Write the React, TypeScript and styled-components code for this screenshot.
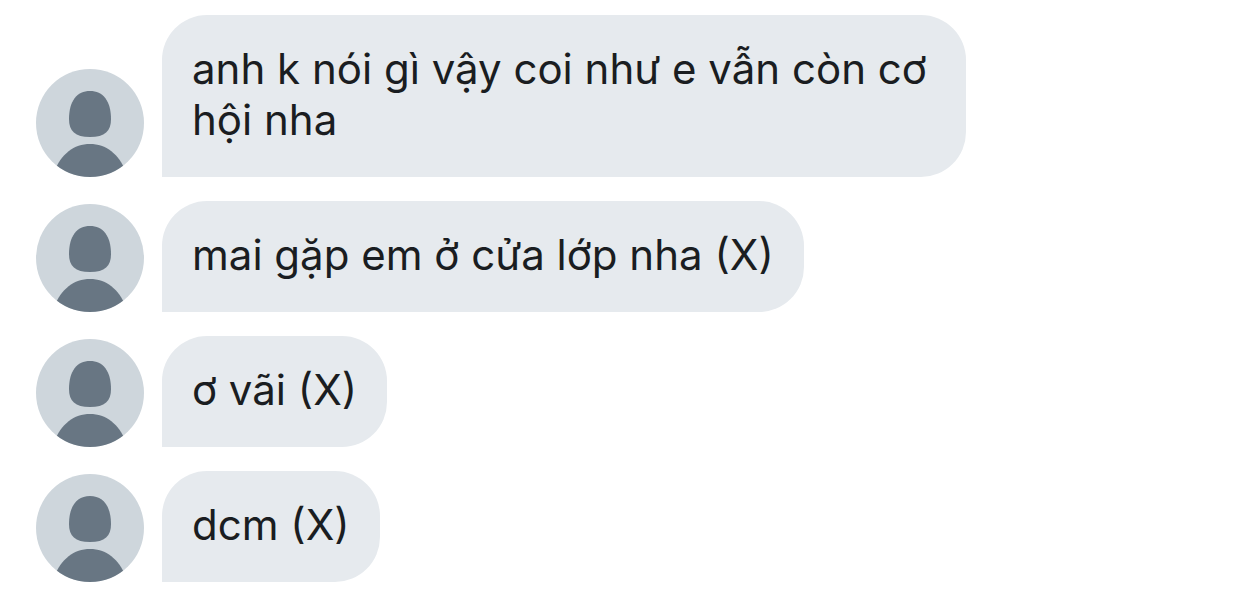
import React from "react";
import styled, { createGlobalStyle } from "styled-components";

const GlobalStyle = createGlobalStyle`
  body {
    margin: 0;
    background: #ffffff;
    color: #1a1d21;
    font-family: Inter, "Noto Sans", sans-serif;
  }
`;

const MessageList = styled.ul`
  list-style: none;
  margin: 0;
  padding: 15px 36px 29px;
  display: flex;
  flex-direction: column;
  gap: 24px;
`;

const MessageRow = styled.li`
  display: flex;
  align-items: flex-end;
  gap: 18px;
`;

const Avatar = styled.svg`
  flex: none;
  width: 108px;
  height: 108px;
  border-radius: 50%;
`;

const Bubble = styled.p`
  box-sizing: border-box;
  margin: 0;
  max-width: 804px;
  padding: 28px 30px 32px;
  border-radius: 45px 45px 45px 0;
  background: #e6eaee;
  font-size: 42px;
  font-weight: 400;
  line-height: 51px;
`;

const messages = [
  "anh k nói gì vậy coi như e vẫn còn cơ hội nha",
  "mai gặp em ở cửa lớp nha (X)",
  "ơ vãi (X)",
  "dcm (X)",
];

function UserAvatar() {
  return (
    <Avatar viewBox="0 0 108 108" aria-hidden="true">
      <rect width="108" height="108" fill="#ced6dc" />
      <path
        d="M54 22C67 22 75 32 75 50C75 62 69 68 54 68C39 68 33 62 33 50C33 32 41 22 54 22Z"
        fill="#687683"
      />
      <path d="M18 103C25 85 38 75 54 75C70 75 83 85 90 103V108H18Z" fill="#687683" />
    </Avatar>
  );
}

export default function App() {
  return (
    <>
      <GlobalStyle />
      <MessageList>
        {messages.map((text) => (
          <MessageRow key={text}>
            <UserAvatar />
            <Bubble>{text}</Bubble>
          </MessageRow>
        ))}
      </MessageList>
    </>
  );
}
